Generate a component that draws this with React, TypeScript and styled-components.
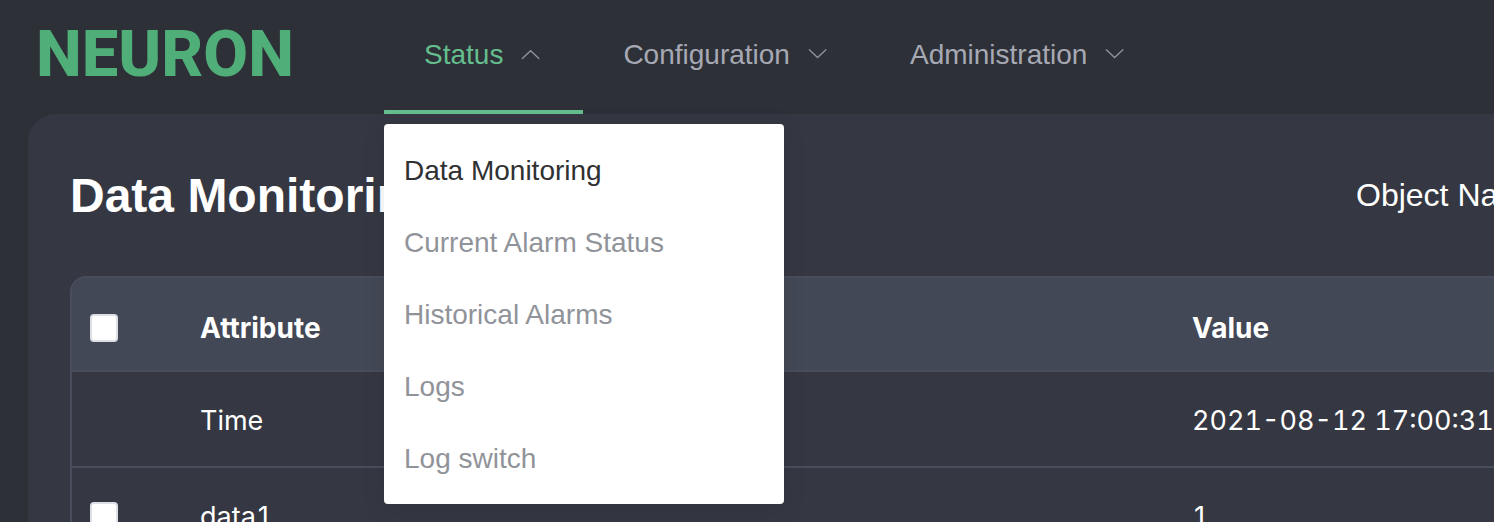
import React from 'react';
import styled, { createGlobalStyle } from 'styled-components';

const GlobalStyle = createGlobalStyle`
  * { box-sizing: border-box; }
  body {
    margin: 0;
    background: #2e3038;
    font-family: "Liberation Sans", Arial, sans-serif;
    font-size: 28px;
    color: #fff;
  }
`;

const Page = styled.div`
  height: 100vh;
  overflow: hidden;
`;

const Header = styled.header`
  display: flex;
  align-items: stretch;
  height: 114px;
`;

const Logo = styled.a`
  flex: none;
  width: 384px;
  padding-left: 36px;
  font: 800 65px/108px Roboto, sans-serif;
  color: #50af78;
  text-decoration: none;
`;

const Nav = styled.nav`
  display: flex;
`;

const NavItem = styled.div`
  position: relative;
  display: flex;
`;

const NavButton = styled.button<{ $active?: boolean }>`
  display: flex;
  align-items: center;
  gap: 16px;
  padding: 0 40px;
  border: 0;
  border-bottom: 4px solid ${(p) => (p.$active ? '#64be8d' : 'transparent')};
  background: none;
  font: inherit;
  line-height: 32px;
  color: ${(p) => (p.$active ? '#64be8d' : '#a6a9b4')};
  white-space: nowrap;
  cursor: pointer;
`;

const Arrow = styled.svg`
  width: 24px;
  height: 24px;
  fill: none;
  stroke: #9093a0;
  stroke-width: 1.3;
  stroke-linecap: round;
`;

const Menu = styled.ul`
  position: absolute;
  z-index: 2;
  top: calc(100% + 10px);
  left: 0;
  width: 400px;
  margin: 0;
  padding: 11px 0 9px;
  border-radius: 4px;
  background: #fff;
  box-shadow: 0 4px 24px rgba(0, 0, 0, 0.1);
  list-style: none;
`;

const MenuLink = styled.a<{ $current?: boolean }>`
  display: block;
  padding: 0 20px;
  line-height: 72px;
  color: ${(p) => (p.$current ? '#303133' : '#909399')};
  text-decoration: none;
`;

const Panel = styled.main`
  min-width: 2200px;
  min-height: calc(100vh - 114px);
  margin-left: 28px;
  padding: 42px;
  border-radius: 28px;
  background: #353842;
`;

const Toolbar = styled.div`
  display: grid;
  grid-template-columns: 1286px 1fr;
  align-items: center;
  height: 80px;
  margin-bottom: 40px;
`;

const Title = styled.h1`
  margin: 0;
  font-size: 48px;
  line-height: 56px;
`;

const FilterLabel = styled.span`
  padding-bottom: 2px;
  font-size: 32px;
  line-height: 40px;
`;

const TableFrame = styled.div`
  overflow: hidden;
  border: 2px solid #4a4d5c;
  border-radius: 16px;
`;

const Table = styled.table`
  width: 100%;
  border-collapse: separate;
  border-spacing: 0;
  table-layout: fixed;
  font-family: Inter, sans-serif;
  font-variant-numeric: tabular-nums;
  text-align: left;
`;

const Column = styled.col<{ $width?: number }>`
  width: ${(p) => (p.$width ? `${p.$width}px` : 'auto')};
`;

const HeadCell = styled.th`
  height: 94px;
  padding: 8px 20px 0;
  border-bottom: 2px solid #4a4d5c;
  background: #434856;
  font-weight: 700;

  &:first-child { padding-left: 18px; }
`;

const Cell = styled.td`
  height: 96px;
  padding: 2px 20px 0;
  border-bottom: 2px solid #4a4d5c;
  font-size: 27px;

  &:first-child { padding-left: 18px; }
`;

const Check = styled.input`
  appearance: none;
  display: block;
  width: 28px;
  height: 28px;
  margin: 0;
  border: 2px solid #dcdfe6;
  border-radius: 4px;
  background: #fff;
`;

const links = ['Data Monitoring', 'Current Alarm Status', 'Historical Alarms', 'Logs', 'Log switch'];

const rows = [
  { name: 'Time', value: '2021-08-12 17:00:31', selectable: false },
  { name: 'data1', value: '1', selectable: true },
];

const Chevron = ({ up }: { up?: boolean }) => (
  <Arrow viewBox="0 0 24 24" aria-hidden="true">
    <path d={up ? 'M3.3 15.5 11.6 7.7 19.9 15.5' : 'M3.3 6.7 11.6 14.5 19.9 6.7'} />
  </Arrow>
);

export default function App() {
  return (
    <Page>
      <GlobalStyle />
      <Header>
        <Logo href="#">NEURON</Logo>
        <Nav>
          <NavItem>
            <NavButton $active aria-expanded="true">
              Status
              <Chevron up />
            </NavButton>
            <Menu>
              {links.map((text, i) => (
                <li key={text}>
                  <MenuLink href="#" $current={i === 0}>{text}</MenuLink>
                </li>
              ))}
            </Menu>
          </NavItem>
          <NavItem>
            <NavButton>
              Configuration
              <Chevron />
            </NavButton>
          </NavItem>
          <NavItem>
            <NavButton>
              Administration
              <Chevron />
            </NavButton>
          </NavItem>
        </Nav>
      </Header>
      <Panel>
        <Toolbar>
          <Title>Data Monitoring</Title>
          <FilterLabel>Object Name</FilterLabel>
        </Toolbar>
        <TableFrame>
          <Table>
            <colgroup>
              <Column $width={108} />
              <Column $width={992} />
              <Column />
            </colgroup>
            <thead>
              <tr>
                <HeadCell><Check type="checkbox" aria-label="Select all" /></HeadCell>
                <HeadCell>Attribute</HeadCell>
                <HeadCell>Value</HeadCell>
              </tr>
            </thead>
            <tbody>
              {rows.map((row) => (
                <tr key={row.name}>
                  <Cell>{row.selectable && <Check type="checkbox" aria-label={`Select ${row.name}`} />}</Cell>
                  <Cell>{row.name}</Cell>
                  <Cell>{row.value}</Cell>
                </tr>
              ))}
            </tbody>
          </Table>
        </TableFrame>
      </Panel>
    </Page>
  );
}
